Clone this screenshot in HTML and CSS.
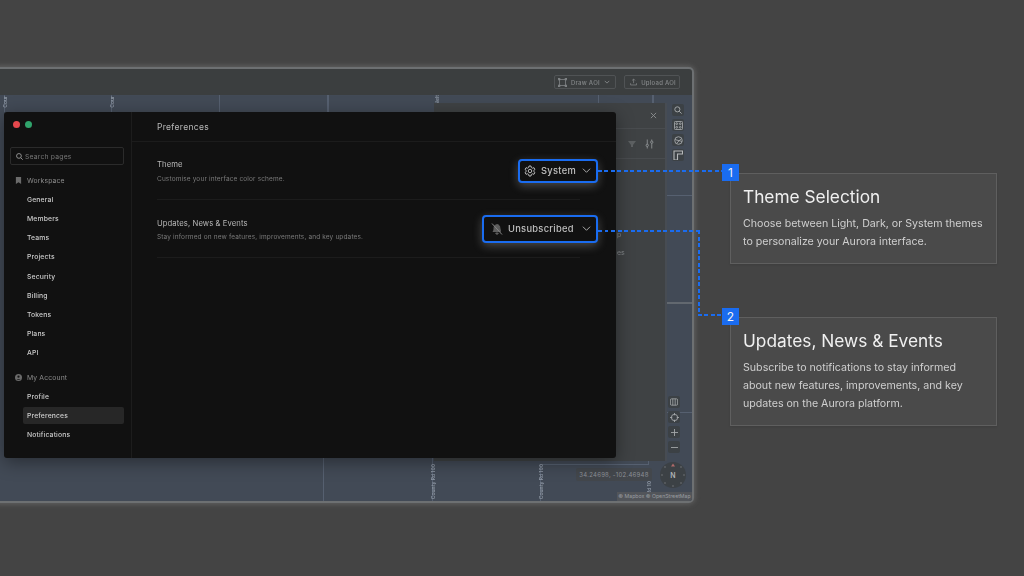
FILE: index.html
```html
<!DOCTYPE html>
<html lang="en">
<head>
<meta charset="UTF-8">
<title>Preferences</title>
<link rel="stylesheet" href="styles.css">
</head>
<body>

<!-- background app window -->
<div class="app">
  <div class="toolbar">
    <div class="tool-btn tool-draw">
      <svg width="9" height="9" viewBox="0 0 12 12" fill="none" stroke="#85888a" stroke-width="1"><rect x="2" y="2" width="8" height="8"/><rect x="0.5" y="0.5" width="2" height="2"/><rect x="9.5" y="0.5" width="2" height="2"/><rect x="0.5" y="9.5" width="2" height="2"/><rect x="9.5" y="9.5" width="2" height="2"/></svg>
      <span>Draw AOI</span>
      <svg class="tool-chev" width="6" height="6" viewBox="0 0 8 8" fill="none" stroke="#85888a" stroke-width="1.2"><path d="M1 2.5l3 3 3-3"/></svg>
    </div>
    <div class="tool-btn tool-upload">
      <svg width="8" height="8" viewBox="0 0 12 12" fill="none" stroke="#85888a" stroke-width="1.2"><path d="M1 8v3h10V8M6 8V1M3.5 3.5L6 1l2.500 2.500"/></svg>
      <span>Upload AOI</span>
    </div>
  </div>
  <div class="map">
    <div class="road" style="left:4px;top:0;width:1px;height:17px"></div>
    <div class="road" style="left:111px;top:0;width:1px;height:17px"></div>
    <div class="road" style="left:219px;top:0;width:1px;height:17px"></div>
    <div class="road" style="left:327px;top:0;width:2px;height:17px"></div>
    <div class="road" style="left:323px;top:363px;width:1px;height:43px"></div>
    <div class="road" style="left:598px;top:0;width:1px;height:8px"></div>
    <div class="road" style="left:652px;top:0;width:2px;height:8px"></div>
    <div class="road" style="left:432px;top:363px;width:1px;height:43px"></div>
    <div class="road" style="left:540px;top:369px;width:1px;height:37px"></div>
    <div class="road" style="left:540px;top:369px;width:108px;height:1px"></div>
    <div class="road" style="left:648px;top:366px;width:1px;height:4px"></div>
    <div class="road" style="left:667px;top:100px;width:25px;height:1px"></div>
    <div class="road road-wide" style="left:667px;top:207px;width:25px;height:2px"></div>
    <div class="road" style="left:667px;top:317px;width:25px;height:1px"></div>
    <span class="road-name" style="left:2px;top:1px">Cour</span>
    <span class="road-name" style="left:109px;top:1px">Cour</span>
    <span class="road-name" style="left:434px;top:0">Nelt</span>
    <span class="road-name" style="left:430px;top:369px">County Rd 100</span>
    <span class="road-name" style="left:538px;top:369px">County Rd 100</span>
    <span class="road-name" style="left:646px;top:386px">Cty Rd 10</span>

    <div class="panel">
      <div class="panel-head">
        <svg width="7" height="7" viewBox="0 0 8 8" fill="none" stroke="#8f9294" stroke-width="1"><path d="M1 1l6 6M7 1l-6 6"/></svg>
      </div>
      <div class="panel-tools">
        <svg width="8" height="6" viewBox="0 0 8 6" fill="#5d6062"><path d="M0 0h8L5 4v2H3V4z"/></svg>
        <svg width="9" height="10" viewBox="0 0 10 10" fill="none" stroke="#8f9294" stroke-width="1"><path d="M2.500 0v10M7.500 0v10"/><circle cx="2.500" cy="6.500" r="1.300" fill="#3f4244"/><circle cx="7.500" cy="3" r="1.300" fill="#3f4244"/></svg>
      </div>
      <div class="panel-text">
        <span>p</span>
        <span>es</span>
      </div>
    </div>

    <div class="rail rail-top">
      <div class="rail-btn"><svg width="8" height="8" viewBox="0 0 10 10" fill="none" stroke="#a5a8aa" stroke-width="1.2"><circle cx="4.200" cy="4.200" r="3.200"/><path d="M6.600 6.600L9.500 9.500"/></svg></div>
      <div class="rail-btn"><svg width="9" height="9" viewBox="0 0 10 10" fill="none" stroke="#a5a8aa" stroke-width="1"><rect x="0.500" y="0.500" width="9" height="9" rx="1"/><circle cx="3" cy="3" r="1"/><circle cx="7" cy="3" r="1"/><circle cx="3" cy="7" r="1"/><circle cx="7" cy="7" r="1"/></svg></div>
      <div class="rail-btn"><svg width="9" height="9" viewBox="0 0 10 10" fill="none" stroke="#a5a8aa" stroke-width="1"><circle cx="5" cy="5" r="4.200"/><path d="M1 4l8 2M3 8l5-5"/></svg></div>
      <div class="rail-btn"><svg width="10" height="10" viewBox="0 0 10 10" fill="none" stroke="#b5b8ba" stroke-width="1.100"><path d="M1 10V1h8.500v3H4.500v6z"/></svg></div>
    </div>
    <div class="rail rail-bottom">
      <div class="rail-btn"><svg width="8" height="8" viewBox="0 0 10 10" fill="none" stroke="#a5a8aa" stroke-width="1"><rect x="0.500" y="1" width="9" height="8" rx="1.500"/><path d="M3.500 1v8M6.500 1v8"/></svg></div>
      <div class="rail-btn"><svg width="9" height="9" viewBox="0 0 10 10" fill="none" stroke="#a5a8aa" stroke-width="1"><circle cx="5" cy="5" r="3.500"/><path d="M5 0v2.500M5 7.500V10M0 5h2.500M7.500 5H10"/></svg></div>
      <div class="rail-btn"><svg width="7" height="7" viewBox="0 0 8 8" fill="none" stroke="#a5a8aa" stroke-width="1"><path d="M4 0v8M0 4h8"/></svg></div>
      <div class="rail-btn"><svg width="7" height="7" viewBox="0 0 8 8" fill="none" stroke="#a5a8aa" stroke-width="1"><path d="M0 4h8"/></svg></div>
    </div>

    <div class="coords">34.24698, -102.46948</div>
    <div class="compass">
      <svg width="26" height="26" viewBox="0 0 26 26"><path d="M13 1.500l2 3h-4z" fill="#b06a6a"/><g fill="#7d8184"><circle cx="13" cy="24" r="0.700"/><circle cx="2" cy="13" r="0.700"/><circle cx="24" cy="13" r="0.700"/><circle cx="5" cy="5" r="0.700"/><circle cx="21" cy="5" r="0.700"/><circle cx="5" cy="21" r="0.700"/><circle cx="21" cy="21" r="0.700"/></g></svg>
      <span>N</span>
    </div>
    <div class="attrib">© Mapbox © OpenStreetMap</div>
  </div>
</div>

<!-- preferences dialog -->
<div class="dialog">
  <aside class="sidebar">
    <div class="dots"><i class="dot red"></i><i class="dot green"></i></div>
    <div class="search">
      <svg width="7" height="7" viewBox="0 0 10 10" fill="none" stroke="#9a9a9a" stroke-width="1.300"><circle cx="4.200" cy="4.200" r="3.400"/><path d="M6.800 6.800L9.600 9.600"/></svg>
      <span>Search pages</span>
    </div>
    <div class="nav-head">
      <svg width="7" height="7" viewBox="0 0 7 8" fill="#6b6b6b"><path d="M0.500 0h6v8L3.500 6 0.500 8z"/></svg>
      <span>Workspace</span>
    </div>
    <a class="nav-item">General</a>
    <a class="nav-item">Members</a>
    <a class="nav-item">Teams</a>
    <a class="nav-item">Projects</a>
    <a class="nav-item">Security</a>
    <a class="nav-item">Billing</a>
    <a class="nav-item">Tokens</a>
    <a class="nav-item">Plans</a>
    <a class="nav-item">API</a>
    <div class="nav-head">
      <svg width="7" height="7" viewBox="0 0 8 8"><circle cx="4" cy="4" r="4" fill="#6b6b6b"/><circle cx="4" cy="3" r="1.300" fill="#161616"/><path d="M1.800 6.600c.5-1.300 3.900-1.300 4.400 0" fill="#161616"/></svg>
      <span>My Account</span>
    </div>
    <a class="nav-item">Profile</a>
    <a class="nav-item active">Preferences</a>
    <a class="nav-item">Notifications</a>
  </aside>
  <main class="content">
    <header class="content-head">Preferences</header>
    <div class="rows">
      <div class="row">
        <div class="row-text">
          <div class="row-title">Theme</div>
          <div class="row-desc">Customise your interface color scheme.</div>
        </div>
        <div class="select select-theme">
          <svg width="12" height="12" viewBox="0 0 24 24" fill="none" stroke="#b8b8b8" stroke-width="2" stroke-linejoin="round"><circle cx="12" cy="12" r="3.500"/><path d="M10 2h4l.6 3 2.400 1.400 2.900-1 2 3.500-2.300 2v2.200l2.300 2-2 3.500-2.900-1L14.600 19 14 22h-4l-.6-3L7 17.600l-2.900 1-2-3.500 2.300-2v-2.200l-2.300-2 2-3.500 2.900 1L9.400 5z"/></svg>
          <span>System</span>
          <svg width="9" height="9" viewBox="0 0 10 10" fill="none" stroke="#a8a8a8" stroke-width="1.100"><path d="M1 3l4 4 4-4"/></svg>
        </div>
      </div>
      <div class="row">
        <div class="row-text">
          <div class="row-title">Updates, News &amp; Events</div>
          <div class="row-desc row-desc-tight">Stay informed on new features, improvements, and key updates.</div>
        </div>
        <div class="select select-news">
          <svg width="12" height="12" viewBox="0 0 24 24" fill="#5e5e5e" stroke="#5e5e5e" stroke-width="2"><path d="M6 9a6 6 0 0 1 11-3l2 11H4c2-2 2-4 2-8zM9.500 20h5a2.500 2.500 0 0 1-5 0z"/><path d="M2 1l20 22" fill="none" stroke="#858585"/></svg>
          <span>Unsubscribed</span>
          <svg width="9" height="9" viewBox="0 0 10 10" fill="none" stroke="#a8a8a8" stroke-width="1.100"><path d="M1 3l4 4 4-4"/></svg>
        </div>
      </div>
    </div>
  </main>
</div>

<!-- connectors between controls and notes -->
<div class="link link-h link-1"></div>
<div class="link link-h link-2a"></div>
<div class="link link-v link-2b"></div>
<div class="link link-h link-2c"></div>

<section class="note note-1">
  <h2>Theme Selection</h2>
  <p>Choose between Light, Dark, or System themes to personalize your Aurora interface.</p>
</section>
<section class="note note-2">
  <h2>Updates, News &amp; Events</h2>
  <p>Subscribe to notifications to stay informed about new features, improvements, and key updates on the Aurora platform.</p>
</section>

<div class="badge badge-1">1</div>
<div class="badge badge-2">2</div>

</body>
</html>
```

FILE: styles.css
```css
* {
  box-sizing: border-box;
}
body {
  margin: 0;
  width: 1024px;
  height: 576px;
  position: relative;
  overflow: hidden;
  background: #444444;
  font-family: Inter, "Liberation Sans", sans-serif;
}

/* background app */
.app {
  position: absolute;
  left: -10px;
  top: 67px;
  width: 704px;
  height: 436px;
  background: #3b3e3f;
  border: 2px solid #6d7072;
  border-radius: 5px;
  box-shadow: 0 0 6px rgba(230, 230, 230, 0.25);
  overflow: hidden;
  display: flex;
  flex-direction: column;
  filter: blur(0.5px);
}
.toolbar {
  height: 26px;
  display: flex;
  justify-content: flex-end;
  align-items: center;
  gap: 8px;
  padding-right: 12px;
  flex: none;
}
.tool-btn {
  height: 14px;
  display: flex;
  align-items: center;
  font-size: 6px;
  font-weight: 500;
  letter-spacing: 0.25px;
  white-space: nowrap;
  color: #85888a;
  border: 1px solid #505355;
  border-radius: 2px;
}
.tool-draw {
  width: 62px;
  padding: 0 3px;
  gap: 4px;
}
.tool-upload {
  width: 56px;
  padding: 0 3px 0 5px;
  gap: 4px;
}
.map {
  flex: 1;
  position: relative;
  background: #424a56;
  margin-left: 8px;
  width: 692px;
}
.road {
  position: absolute;
  background: #566070;
}
.road-wide {
  background: #62686f;
}
.road-name {
  position: absolute;
  writing-mode: vertical-rl;
  transform: rotate(180deg);
  white-space: nowrap;
  font-size: 5px;
  font-weight: 600;
  color: #8d96a3;
}

.panel {
  position: absolute;
  left: 434px;
  top: 8px;
  width: 233px;
  height: 358px;
  background: #3f4244;
  border-right: 2px solid #474c53;
}
.panel-head {
  height: 26px;
  display: flex;
  justify-content: flex-end;
  align-items: center;
  padding-right: 8px;
  border-bottom: 1px solid #494c4f;
}
.panel-tools {
  height: 30px;
  display: flex;
  justify-content: flex-end;
  align-items: center;
  gap: 9px;
  padding: 1px 11px 0 0;
  border-bottom: 1px solid #494c4f;
}
.panel-text {
  position: absolute;
  left: 183px;
  top: 128px;
  display: flex;
  flex-direction: column;
  gap: 10px;
  font-size: 7px;
  line-height: 8px;
  color: #85888b;
}

.rail {
  position: absolute;
  display: flex;
  flex-direction: column;
  gap: 3px;
}
.rail-top {
  left: 672px;
  top: 9px;
}
.rail-bottom {
  left: 668px;
  top: 301px;
}
.rail-btn {
  width: 12px;
  height: 12px;
  background: #3c4145;
  border-radius: 2px;
  display: flex;
  align-items: center;
  justify-content: center;
}
.coords {
  position: absolute;
  left: 576px;
  top: 373px;
  width: 76px;
  height: 13px;
  background: #43474c;
  font-size: 6px;
  line-height: 13px;
  text-align: center;
  letter-spacing: 0.25px;
  color: #8b9097;
  border-radius: 2px;
}
.compass {
  position: absolute;
  left: 660px;
  top: 367px;
  width: 26px;
  height: 26px;
  border-radius: 50%;
  background: #3c4145;
  display: flex;
  align-items: center;
  justify-content: center;
}
.compass svg {
  position: absolute;
  left: 0;
  top: 0;
}
.compass span {
  font-size: 7px;
  font-weight: 600;
  color: #b0b3b5;
}
.attrib {
  position: absolute;
  right: 0;
  bottom: 0;
  width: 75px;
  height: 9px;
  background: #52555a;
  font-size: 5.200px;
  line-height: 9px;
  text-align: center;
  white-space: nowrap;
  color: #9a9da1;
}

/* dialog */
.dialog {
  position: absolute;
  left: 4px;
  top: 112px;
  width: 612px;
  height: 346px;
  background: #111111;
  border-radius: 3px;
  display: flex;
  box-shadow: 0 4px 18px rgba(0, 0, 0, 0.4);
  filter: blur(0.3px);
}
.sidebar {
  width: 128px;
  flex: none;
  border-right: 1px solid #1d1d1d;
  padding: 9px 7px 0 6px;
}
.dots {
  display: flex;
  gap: 5px;
  padding-left: 3px;
  height: 26px;
}
.dot {
  width: 7px;
  height: 7px;
  border-radius: 50%;
}
.red {
  background: #e5484d;
}
.green {
  background: #30a46c;
}
.search {
  height: 18px;
  display: flex;
  align-items: center;
  gap: 2px;
  padding-left: 5px;
  border: 1px solid #2b2b2b;
  border-radius: 2px;
  font-size: 6.800px;
  letter-spacing: 0.2px;
  color: #757575;
}
.nav-head {
  height: 19px;
  margin-top: 6px;
  display: flex;
  align-items: center;
  gap: 5px;
  padding-left: 5px;
  font-size: 6.800px;
  letter-spacing: 0.15px;
  color: #8c8c8c;
}
.nav-item {
  display: block;
  height: 19.150px;
  line-height: 19px;
  margin-left: 13px;
  padding-left: 4px;
  font-size: 6.800px;
  font-weight: 500;
  letter-spacing: 0.15px;
  color: #cccccc;
  border-radius: 2px;
}
.nav-item.active {
  height: 17px;
  line-height: 17px;
  margin: 1px 0 1px 13px;
  background: #272727;
}
.content {
  flex: 1;
  display: flex;
  flex-direction: column;
}
.content-head {
  height: 30px;
  padding-left: 25px;
  line-height: 30px;
  font-size: 8.500px;
  letter-spacing: 0.3px;
  color: #b8b8b8;
  border-bottom: 1px solid #1c1c1c;
}
.rows {
  padding: 0 36px 0 25px;
}
.row {
  height: 58px;
  display: flex;
  justify-content: space-between;
  align-items: center;
  border-bottom: 1px solid #1c1c1c;
}
.row-text {
  padding-top: 2px;
}
.row-title {
  font-size: 7.700px;
  letter-spacing: 0.08px;
  color: #b8b8b8;
}
.row-desc {
  margin-top: 6px;
  font-size: 6.500px;
  letter-spacing: 0.14px;
  color: #7a7a7a;
}
.row-desc-tight {
  margin-top: 5px;
}
.select {
  display: flex;
  align-items: center;
  gap: 5px;
  background: #111111;
  border: 2px solid #1a6cf0;
  border-radius: 4px;
  font-size: 9.300px;
  font-weight: 500;
  letter-spacing: 0.3px;
  color: #c0c0c0;
  box-shadow: 0 3px 10px rgba(220, 220, 220, 0.28);
  margin-right: -18px;
}
.select span {
  flex: 1;
}
.select-theme {
  width: 80px;
  height: 24px;
  padding: 0 5px 0 4px;
}
.select-news {
  width: 116px;
  height: 28px;
  padding: 0 5px 0 7px;
}

/* connectors */
.link {
  position: absolute;
}
.link-h {
  height: 2px;
  background: repeating-linear-gradient(90deg, #1a6cf0 0 4px, transparent 4px 6.500px);
}
.link-v {
  width: 2px;
  background: repeating-linear-gradient(180deg, #1a6cf0 0 4px, transparent 4px 6.500px);
}
.link-1 {
  left: 598px;
  top: 170px;
  width: 124px;
}
.link-2a {
  left: 598px;
  top: 230px;
  width: 102px;
}
.link-2b {
  left: 698px;
  top: 230px;
  height: 85px;
}
.link-2c {
  left: 698px;
  top: 314px;
  width: 24px;
}
.badge {
  position: absolute;
  left: 722px;
  width: 17px;
  height: 17px;
  background: #1a6cf0;
  color: #f2f2f2;
  font-size: 12px;
  line-height: 18px;
  text-align: center;
}
.badge-1 {
  top: 164px;
}
.badge-2 {
  top: 308px;
}
.note {
  position: absolute;
  left: 730px;
  width: 267px;
  padding: 12px 12px 0;
  background: #4a4a4a;
  border: 1px solid #5f5f5f;
  box-shadow: 0 1px 2px rgba(0, 0, 0, 0.1);
  filter: blur(0.2px);
}
.note-1 {
  top: 173px;
  height: 91px;
}
.note-2 {
  top: 317px;
  height: 109px;
}
.note h2 {
  margin: 0 0 8px;
  font-size: 17.300px;
  line-height: 21px;
  font-weight: 400;
  color: #f0f0f0;
}
.note p {
  margin: 0;
  font-size: 10.650px;
  line-height: 18.200px;
  color: #cfcfcf;
}
```
